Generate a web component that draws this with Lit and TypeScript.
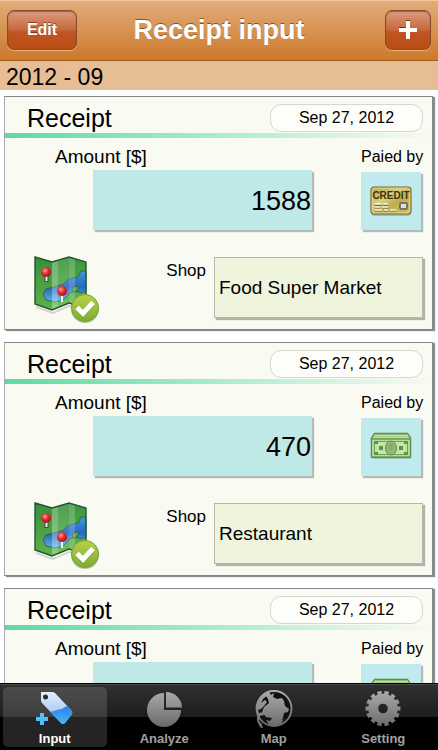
import { LitElement, html, css, svg } from "lit";
import { customElement, property, state } from "lit/decorators.js";
import { classMap } from "lit/directives/class-map.js";

type Payment = "credit" | "cash";

interface Receipt {
  date: string;
  amount: number;
  payment: Payment;
  shop: string;
}

const RECEIPTS: Receipt[] = [
  { date: "Sep 27, 2012", amount: 1588, payment: "credit", shop: "Food Super Market" },
  { date: "Sep 27, 2012", amount: 470, payment: "cash", shop: "Restaurant" },
  { date: "Sep 27, 2012", amount: 2000, payment: "cash", shop: "Book Store" },
];

const creditIcon = html`<svg width="42" height="32" viewBox="0 0 42 32" aria-hidden="true">
  <defs>
    <linearGradient id="card" x1="0" y1="0" x2="1" y2="1">
      <stop offset="0" stop-color="#b9aa50" />
      <stop offset=".4" stop-color="#d8cf7c" />
      <stop offset=".6" stop-color="#bdae50" />
      <stop offset="1" stop-color="#d0c56c" />
    </linearGradient>
  </defs>
  <rect x="1" y="4" width="40" height="27" rx="3" fill="#8b8f80" opacity=".5" />
  <rect x="1" y="2" width="40" height="27" rx="3" fill="url(#card)" stroke="#776b28" stroke-width="1.200" />
  <rect x="2.200" y="3.200" width="37.600" height="24.600" rx="2" fill="none" stroke="#e9dfa0" stroke-width=".7" />
  <text x="21" y="14" text-anchor="middle" class="credit">CREDIT</text>
  <path d="M4.500 20h7m1.500 0h5M4.500 22.500h6m1.500 0h6M4.500 25.500h8m1.500 0h4m2 0h6" stroke="#77682f" stroke-width="1.800" />
  <path d="M4.500 19h7m1.500 0h5M4.500 22h6m1.500 0h6M4.500 25h8m1.500 0h4m2 0h6" stroke="#fffde8" stroke-width="1.300" />
  <rect x="30" y="18" width="7" height="6" rx="1" fill="#dcdce8" stroke="#5e5b4c" stroke-width="1.500" />
</svg>`;

const cashIcon = html`<svg width="42" height="32" viewBox="0 0 42 32" aria-hidden="true">
  <rect x="2" y="8" width="39" height="20" rx="1" fill="#7a9a8a" opacity=".5" />
  <path d="M4.500 2.500h33l3 4.500v19h-39V7z" fill="#a9cc86" stroke="#568f45" stroke-width="1.300" />
  <path d="M4 4.500h34M3 6.500h36" stroke="#c8e2a9" stroke-width=".8" />
  <rect x="1.500" y="8" width="39" height="18" fill="#b9dc99" stroke="#568f45" stroke-width="1.200" />
  <rect x="4.500" y="10.500" width="33" height="13" fill="#c5e5a8" stroke="#6ea45a" />
  <path d="M4 10h4v3H4zM34 10h4v3h-4zM4 21h4v3H4zM34 21h4v3h-4z" fill="#5c9549" />
  <rect x="9" y="15" width="4" height="4" fill="#5c9549" />
  <rect x="29" y="15" width="4" height="4" fill="#5c9549" />
  <ellipse cx="21" cy="17" rx="5.500" ry="7" fill="#91ba78" stroke="#5c9549" />
  <ellipse cx="21" cy="15.500" rx="2.500" ry="3.500" fill="#84ad6c" />
</svg>`;

const mapIcon = html`<svg width="68" height="68" viewBox="0 0 68 68" aria-hidden="true">
  <defs>
    <linearGradient id="land" x1="0" y1="0" x2="0" y2="1">
      <stop offset="0" stop-color="#3b9440" />
      <stop offset="1" stop-color="#63b94d" />
    </linearGradient>
    <linearGradient id="sea" x1="0" y1="0" x2="0" y2="1">
      <stop offset="0" stop-color="#3f98dc" />
      <stop offset=".5" stop-color="#2668bd" />
      <stop offset="1" stop-color="#62b8ec" />
    </linearGradient>
    <radialGradient id="pin" cx=".4" cy=".35" r=".7">
      <stop offset="0" stop-color="#ff9a96" />
      <stop offset=".5" stop-color="#dc2a2e" />
      <stop offset="1" stop-color="#a60d14" />
    </radialGradient>
    <linearGradient id="tick" x1="0" y1="0" x2="0" y2="1">
      <stop offset="0" stop-color="#b7d146" />
      <stop offset="1" stop-color="#7fae30" />
    </linearGradient>
  </defs>
  <path d="M3 51l17 6 16-7 17 5v2l-17-5-16 7-17-6z" fill="#777" opacity=".3" />
  <path d="M2 2l17 5L36 2l17 5v46l-17-5-17 7L2 49z" fill="url(#land)" />
  <path d="M53 16h-5l-3 6-9 2-6 5-9 3-8 2-3 5 3 6 9 2 8-2 7-7 6-2 5 2 5-2z" fill="url(#sea)" stroke="#1e6045" stroke-width=".8" />
  <path d="M39 34l4-3 3 1-2 4-4 1z" fill="#55ab49" stroke="#1e6045" stroke-width=".8" />
  <path d="M19 7L36 2v46l-17 7z" fill="#fff" opacity=".1" />
  <path d="M19 7l6-2v48l-6 2zM36 2l6 2v46l-6-2z" fill="#fff" opacity=".2" />
  <path d="M2 2l17 5v48L2 49z" fill="#000" opacity=".04" />
  <path d="M2 2l17 5L36 2l17 5v46l-17-5-17 7L2 49z" fill="none" stroke="#205a2c" stroke-width="1.400" />
  <path d="M13.500 19v8" stroke="#245b2c" stroke-width="4" />
  <path d="M13.500 19v7" stroke="#f2f2f2" stroke-width="2" />
  <circle cx="13" cy="17" r="5" fill="url(#pin)" />
  <path d="M29 39v8" stroke="#f2f2f2" stroke-width="2" />
  <circle cx="29" cy="36" r="5" fill="url(#pin)" />
  <circle cx="52" cy="54" r="14" fill="#6f8f4a" opacity=".5" />
  <circle cx="52" cy="53" r="13.500" fill="url(#tick)" stroke="#74a043" />
  <path d="M44 53l6 6 10-11" fill="none" stroke="#6b8f2a" stroke-width="6" opacity=".5" />
  <path d="M44 52.500l6 6 10-11" fill="none" stroke="#fff" stroke-width="5" />
</svg>`;

const greyFill = svg`<defs>
  <linearGradient id="grey" x1="0" y1="0" x2="0" y2="40" gradientUnits="userSpaceOnUse">
    <stop offset="0" stop-color="#b0b0b0" />
    <stop offset="1" stop-color="#686868" />
  </linearGradient>
</defs>`;

const TABS = [
  {
    label: "Input",
    icon: html`<svg width="44" height="40" viewBox="0 0 44 40" aria-hidden="true">
      <defs>
        <linearGradient id="pale" x1="0" y1="0" x2="0" y2="1">
          <stop offset="0" stop-color="#e4eefc" />
          <stop offset="1" stop-color="#8fb9f0" />
        </linearGradient>
        <linearGradient id="deep" x1="0" y1="0" x2="0" y2="1">
          <stop offset="0" stop-color="#2a80e8" />
          <stop offset="1" stop-color="#43b9fb" />
        </linearGradient>
      </defs>
      <path d="M8 4h11q2 0 3 1l16 17q2 2 1 4l-7 9q-2 2-4 0L9 15q-1-1-1-3z" fill="url(#pale)" />
      <path d="M17 24q4-1 7-2 6-1 10-4l4 4q2 2 1 4l-7 9q-2 2-4 0z" fill="url(#deep)" />
      <circle cx="12.500" cy="9" r="2.500" fill="#2b2b2b" />
      <path d="M7 25h4v4h4v4h-4v4H7v-4H3v-4h4z" fill="#4fc0fa" />
    </svg>`,
  },
  {
    label: "Analyze",
    icon: html`<svg width="44" height="40" viewBox="0 0 44 40" aria-hidden="true">
      ${greyFill}
      <path d="M22 5a17 17 0 1 0 17 17H22z" fill="url(#grey)" />
      <path d="M24 4A16 16 0 0 1 40 19.500H24z" fill="url(#grey)" />
    </svg>`,
  },
  {
    label: "Map",
    icon: html`<svg width="44" height="40" viewBox="0 0 44 40" aria-hidden="true">
      ${greyFill}
      <circle cx="22" cy="20.500" r="17.500" fill="#111" stroke="url(#grey)" stroke-width="1.800" />
      <path d="M5 18l2-7 5-5 5-2-1 3-5 4-2 4 4-3 2 2-3 4-3 3-3 1 1 3 4-1 3 1-2 2-4 1-1 5 3 3 1 5-3-2-3-6z" fill="url(#grey)" />
      <path d="M17 4l2 3 3-2-1 4 4 2 5-1 2 3 1 5 4 3-1 3-4 1-1 5-4 6-4 3-3-4 0-5-6-1-4-5 2-5 5-4-1-4-2-3z" fill="url(#grey)" />
      <path d="M14 32l4 1 2-3 6 4 6-3-3 5-7 2-5-1z" fill="url(#grey)" />
    </svg>`,
  },
  {
    label: "Setting",
    icon: html`<svg width="44" height="40" viewBox="0 0 44 40" aria-hidden="true">
      ${greyFill}
      <circle cx="22" cy="20.500" r="9.800" fill="none" stroke="url(#grey)" stroke-width="10" />
      <circle cx="22" cy="20.500" r="15.500" fill="none" stroke="url(#grey)" stroke-width="4" pathLength="28" stroke-dasharray="1.200 .8" stroke-dashoffset=".6" />
    </svg>`,
  },
];

@customElement("receipt-card")
export class ReceiptCard extends LitElement {
  @property({ attribute: false }) receipt!: Receipt;

  static styles = css`
    :host {
      display: block;
    }
    .card {
      padding-bottom: 6px;
      border: 1px solid #858585;
      border-left-color: #aaa;
      background: #f9faf1;
      box-shadow: 2px 1px 1px #8c8c8c;
    }
    .head {
      display: flex;
      align-items: center;
      justify-content: space-between;
      height: 36px;
      padding: 0 9px 0 22px;
    }
    .rule {
      height: 5px;
      background: linear-gradient(90deg, #5fd9a3, #b9efd4 60%, #f9faf1);
    }
    h2 {
      margin: 0;
      padding-top: 6px;
      font-size: 25px;
      line-height: 30px;
      font-weight: 400;
    }
    input,
    button {
      box-sizing: border-box;
      margin: 0;
      font-family: inherit;
      color: #000;
    }
    .date {
      width: 153px;
      height: 28px;
      margin-top: 6px;
      padding: 0;
      border: 1px solid #d5d7d2;
      border-radius: 11px;
      background: #fdfef9;
      font-size: 16px;
      text-align: center;
    }
    .money {
      display: flex;
      gap: 49px;
      padding: 6px 11px 0 50px;
    }
    .col {
      display: flex;
      flex-direction: column;
    }
    .grow {
      flex: 1;
      min-width: 0;
    }
    .cap {
      font-size: 16px;
      line-height: 26px;
      white-space: nowrap;
    }
    .big {
      font-size: 19px;
    }
    .amount {
      min-width: 0;
      height: 60px;
      margin-left: 38px;
      padding: 2px 1px 0 8px;
      border: 0;
      background: #bfe9e7;
      box-shadow: 2px 2px 1px #b3bab8;
      font-size: 27px;
      text-align: right;
    }
    .pay {
      display: grid;
      place-items: center;
      width: 60px;
      height: 58px;
      margin-top: 2px;
      padding: 0;
      border: 0;
      background: #c1eaee;
      box-shadow: 2px 2px 1px #b3bab8;
    }
    .paid {
      width: 60px;
    }
    .credit {
      font: 700 10px "Liberation Sans", Arial, sans-serif;
      fill: #40300c;
    }
    .place {
      display: flex;
      padding: 25px 9px 0 28px;
    }
    .map {
      width: 68px;
      height: 68px;
      padding: 0;
      border: 0;
      background: none;
    }
    .shop-cap {
      flex: 0 0 105px;
      padding-top: 2px;
      font-size: 17px;
      line-height: 28px;
      text-align: right;
    }
    .shop {
      flex: 1;
      min-width: 0;
      height: 61px;
      margin: 2px 0 0 8px;
      padding: 0 4px;
      border: 1px solid #b4b8aa;
      background: #eff4dc;
      box-shadow: 2px 2px 1px #b0b3a8;
      font-size: 19px;
    }
    svg {
      display: block;
    }
  `;

  render() {
    const r = this.receipt;
    return html`<article class="card">
      <header class="head">
        <h2>Receipt</h2>
        <input class="date" aria-label="Date" .value=${r.date} />
      </header>
      <div class="rule"></div>
      <div class="money">
        <div class="col grow">
          <label class="cap big" for="amount">Amount [$]</label>
          <input id="amount" class="amount" inputmode="decimal" .value=${String(r.amount)} />
        </div>
        <div class="col paid">
          <label class="cap" for="pay">Paied by</label>
          <button id="pay" class="pay">${r.payment === "credit" ? creditIcon : cashIcon}</button>
        </div>
      </div>
      <div class="place">
        <button class="map" aria-label="Show on map">${mapIcon}</button>
        <label class="shop-cap" for="shop">Shop</label>
        <input id="shop" class="shop" .value=${r.shop} />
      </div>
    </article>`;
  }
}

@customElement("app-root")
export class AppRoot extends LitElement {
  @state() private tab = "Input";

  static styles = css`
    :host {
      display: flex;
      flex-direction: column;
      height: 100vh;
      background: #fff;
      color: #000;
      font-family: "Liberation Sans", Arial, Helvetica, sans-serif;
    }
    .bar {
      display: grid;
      grid-template-columns: 70px 1fr 70px;
      align-items: center;
      box-sizing: border-box;
      flex: none;
      height: 61px;
      padding: 0 7px;
      border-bottom: 1px solid #a2601f;
      background: linear-gradient(#e2ad7c, #cc792a);
      box-shadow: inset 0 1px 0 #f0c8a4;
    }
    h1 {
      margin: 0;
      color: #fff;
      font-size: 27px;
      line-height: 32px;
      text-align: center;
      text-shadow: 0 -1px 0 rgba(70, 35, 5, 0.6);
      white-space: nowrap;
    }
    .btn {
      display: grid;
      place-items: center;
      height: 40px;
      padding: 0;
      border: 1px solid #8a4a30;
      border-radius: 7px;
      background: linear-gradient(#dc9c80, #c8683c 50%, #bf5523 55%, #bd4c15);
      box-shadow: 0 1px 0 rgba(255, 225, 190, 0.5), inset 0 1px 1px rgba(90, 40, 20, 0.5);
      color: #fff;
      font: 700 16px "Liberation Sans", Arial, sans-serif;
      text-shadow: 0 -1px 0 rgba(70, 25, 5, 0.6);
    }
    .add {
      width: 46px;
      justify-self: end;
    }
    .list {
      flex: 1;
      min-height: 0;
      overflow-y: auto;
      scrollbar-width: none;
    }
    .month {
      margin: 0;
      padding: 4px 6px 0;
      background: #e7bd95;
      font-size: 23px;
      line-height: 25px;
      font-weight: 400;
    }
    .cards {
      display: flex;
      flex-direction: column;
      gap: 12px;
      padding: 6px 5px 6px 4px;
    }
    .tabs {
      display: grid;
      grid-template-columns: repeat(4, 1fr);
      box-sizing: border-box;
      flex: none;
      height: 67px;
      border-top: 1px solid #000;
      background: linear-gradient(#4a4a4a 1px, #303030 1px, #1d1d1d 33px, #000 33px);
    }
    .tab {
      display: flex;
      flex-direction: column;
      align-items: center;
      gap: 3px;
      margin: 3px;
      padding: 1px 0 0;
      border: 0;
      border-radius: 5px;
      background: none;
      color: #a0a0a0;
      font: 700 13px/16px "Liberation Sans", Arial, sans-serif;
    }
    .on {
      background: rgba(255, 255, 255, 0.14);
      color: #fff;
    }
    svg {
      display: block;
    }
  `;

  render() {
    return html`
      <header class="bar">
        <button class="btn">Edit</button>
        <h1>Receipt input</h1>
        <button class="btn add" aria-label="Add receipt">
          <svg width="20" height="20" viewBox="0 0 20 20" aria-hidden="true">
            <path d="M8 0h4v8h7v3h-7v7H8v-7H1V7h7z" fill="#7a3416" />
            <path d="M8 1h4v7h7v4h-7v7H8v-7H1V8h7z" fill="#fff" />
          </svg>
        </button>
      </header>
      <main class="list">
        <h2 class="month">2012 - 09</h2>
        <div class="cards">
          ${RECEIPTS.map((r) => html`<receipt-card .receipt=${r}></receipt-card>`)}
        </div>
      </main>
      <nav class="tabs">
        ${TABS.map(
          (t) => html`<button
            class=${classMap({ tab: true, on: t.label === this.tab })}
            @click=${() => (this.tab = t.label)}
          >
            ${t.icon}<span>${t.label}</span>
          </button>`
        )}
      </nav>
    `;
  }
}
